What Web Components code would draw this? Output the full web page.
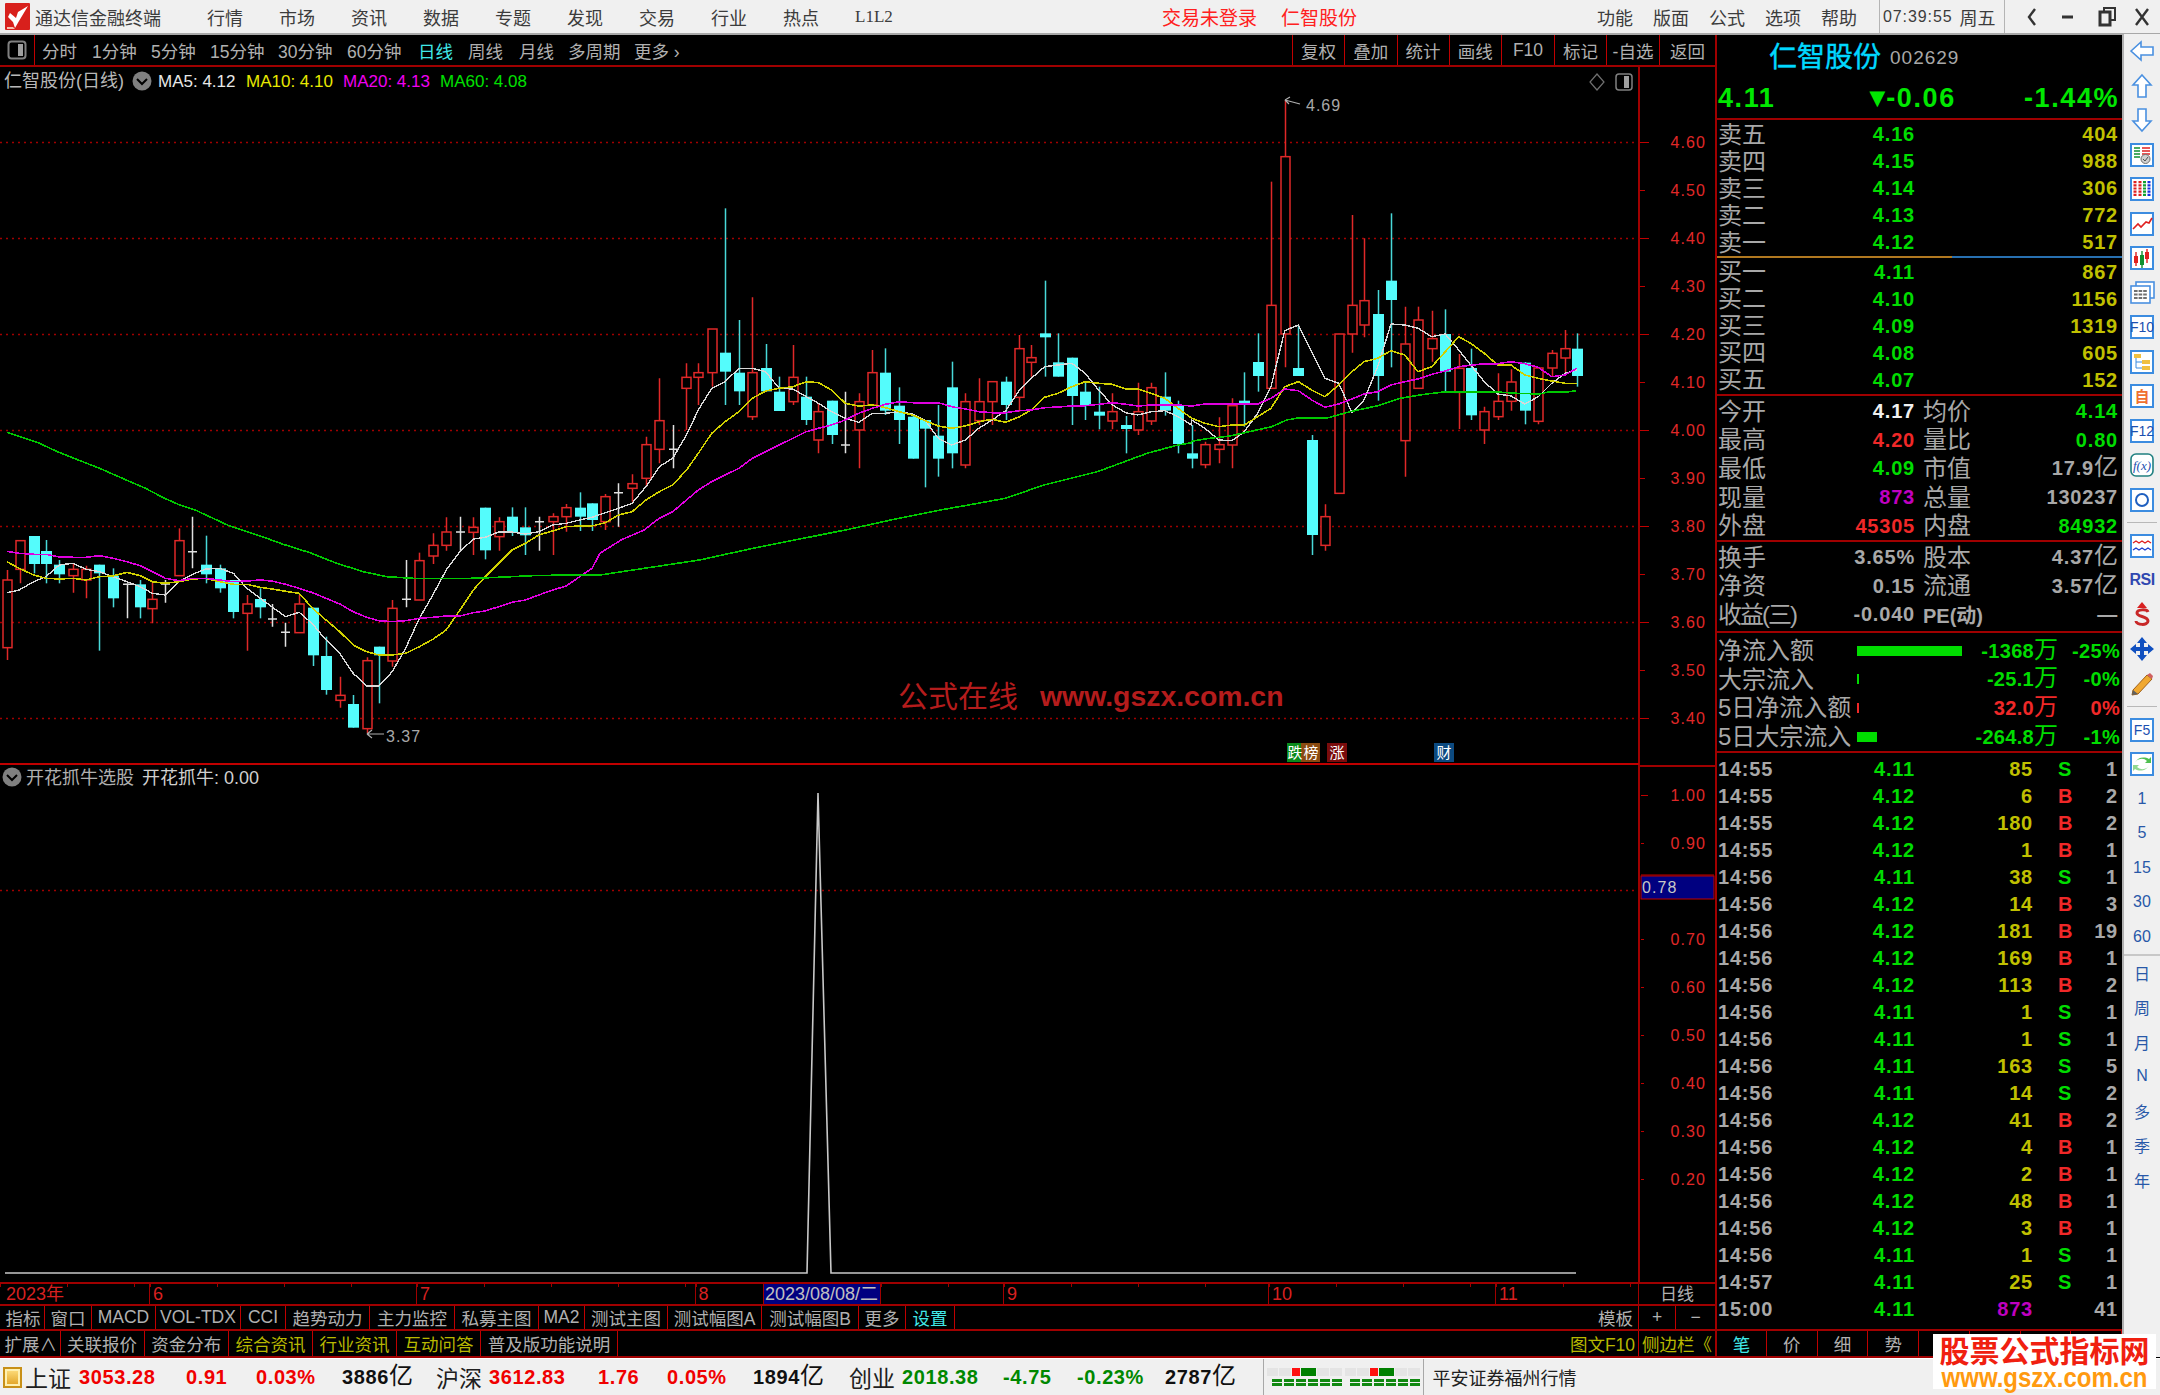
<!DOCTYPE html>
<html lang="zh">
<head>
<meta charset="utf-8">
<title>通达信金融终端</title>
<style>
  html, body { margin: 0; background: #000; }
  body { width: 2160px; height: 1395px; overflow: hidden; }
</style>
</head>
<body>
<tdx-app></tdx-app>
<script>
const FONT = '"Liberation Sans","Noto Sans CJK SC",sans-serif';
const RED = '#a00000';

class TdxCell extends HTMLElement {
    constructor() {
        super();
        this.attachShadow({ mode: 'open' });
        this.shadowRoot.innerHTML = `<style>
            :host{
                display:flex; align-items:center; justify-content:center;
                box-sizing:border-box; flex:0 0 var(--w, auto); height:100%;
                border-right:1px solid #c00000; white-space:nowrap;
                font:17.5px ${FONT}; color:#b0b0b0;
            }
            :host([tone="y"]){ color:#b8b800; }
            :host([tone="c"]){ color:#40e8e8; }
            :host([plain]){ border-right:0; }
        </style><slot></slot>`;
    }
}
globalThis.customElements.define('tdx-cell', TdxCell);

const cells = (list, attrs = '') => list.map(([t, w, tone]) =>
    `<tdx-cell style="--w:${w}px" ${tone ? `tone="${tone}"` : ''} ${attrs}>${t}</tdx-cell>`).join('');

class TdxTitlebar extends HTMLElement {
    constructor() {
        super();
        this.attachShadow({ mode: 'open' });
    }
    connectedCallback() {
        const menu = ['行情', '市场', '资讯', '数据', '专题', '发现', '交易', '行业', '热点'];
        this.shadowRoot.innerHTML = `<style>
            :host{
                display:grid; grid-template-columns:207px 955px 435px 282px 125px 156px;
                align-items:center; box-sizing:border-box; height:35px;
                background:#f0f0f0; border-bottom:2px solid #a8a8a8;
                font:18px ${FONT}; color:#3c3c3c;
            }
            .brand{ display:flex; align-items:center; gap:5px; padding-left:5px; white-space:nowrap; }
            .menu{ display:flex; gap:36px; white-space:nowrap; }
            .menu .l{ font:17px "Liberation Serif",serif; align-self:center; }
            .login{ color:#ff2020; font-size:19px; display:flex; gap:24px; white-space:nowrap; }
            .help{ display:flex; gap:20px; }
            .clock,.win{ display:flex; align-items:center; height:33px; border-left:1px solid #b4b4b4; box-sizing:border-box; }
            .clock{ padding-left:3px; gap:7px; font-size:18px; white-space:nowrap; }
            .clock b{ font:16px "Liberation Sans"; letter-spacing:.9px; }
            .win svg{ display:block; }
        </style>
        <div class="brand">
            <svg width="25" height="27" viewBox="0 0 25 27">
                <rect width="25" height="27" rx="1" fill="#d8201c"/>
                <path d="M3 14 L8 19 L10 25 L14 18 L23 3 L13 9 L11 15 L5 10 Z" fill="#fff"/>
                <path d="M2 24 L8 24 L10 26 L2 26 Z" fill="#f8c0b0"/>
            </svg>
            <span>通达信金融终端</span>
        </div>
        <div class="menu">${menu.map(m => `<span>${m}</span>`).join('')}<span class="l">L1L2</span></div>
        <div class="login"><span>交易未登录</span><span>仁智股份</span></div>
        <div class="help"><span>功能</span><span>版面</span><span>公式</span><span>选项</span><span>帮助</span></div>
        <div class="clock"><b>07:39:55</b><span>周五</span></div>
        <div class="win">
            <svg width="155" height="33" viewBox="0 0 155 33" fill="none" stroke="#333" stroke-width="2.4">
                <path d="M30 9 L24 17 L30 25"/>
                <path d="M57 17 H68" stroke-width="3"/>
                <rect x="95" y="12" width="10" height="13" stroke-width="3"/>
                <path d="M99 11 V8 H110 V20 H106" stroke-width="2"/>
                <path d="M131 9 L143 25 M143 9 L131 25"/>
            </svg>
        </div>`;
    }
}
globalThis.customElements.define('tdx-titlebar', TdxTitlebar);

class TdxToolbar extends HTMLElement {
    constructor() {
        super();
        this.attachShadow({ mode: 'open' });
    }
    connectedCallback() {
        const left = [['分时', 50], ['1分钟', 59], ['5分钟', 59], ['15分钟', 68], ['30分钟', 69], ['60分钟', 71],
            ['日线', 50, 'c'], ['周线', 51], ['月线', 49], ['多周期', 66], ['更多 ›', 56]];
        const right = [['复权', 52], ['叠加', 52.5], ['统计', 52], ['画线', 52.5], ['F10', 53], ['标记', 52], ['-自选', 53], ['返回', 55]];
        this.shadowRoot.innerHTML = `<style>
            :host{ display:flex; box-sizing:border-box; height:32px; border-bottom:2px solid ${RED}; background:#000; }
            .box{ flex:0 0 42px; box-sizing:border-box; }
            .box div{ width:35px; height:100%; box-sizing:border-box; border-right:1px solid #c00000; display:flex; align-items:center; justify-content:center; }
            .items{ display:flex; height:100%; }
            .items tdx-cell{ justify-content:flex-start; }
            .fill{ flex:1; }
            .right{ display:flex; height:100%; border-left:1px solid #c00000; }
            .right tdx-cell:last-child{ border-right:0; }
        </style>
        <div class="box"><div>
            <svg width="20" height="20" viewBox="0 0 20 20"><rect x="1.5" y="1.5" width="17" height="17" rx="3" fill="none" stroke="#808080" stroke-width="2"/><rect x="11" y="4" width="5" height="12" fill="#a0a0a0"/></svg>
        </div></div>
        <div class="items">${cells(left, 'plain')}</div>
        <div class="fill"></div>
        <div class="right">${cells(right)}</div>`;
    }
}
globalThis.customElements.define('tdx-toolbar', TdxToolbar);

// 取自截图的K线,坐标系:[放大图x, 上影, 实体上, 实体下, 下影, 类型]
const K8 = [[18,510,540,743,780,'r'],[53,420,422,508,550,'r'],[88,408,408,492,520,'c'],[120,420,453,492,550,'c'],[155,480,494,523,550,'c'],
[190,490,508,527,578,'r'],[225,497,508,540,595,'r'],[260,494,494,520,752,'c'],[295,505,527,595,622,'c'],[332,550,553,553,655,'w'],
[366,540,553,622,655,'c'],[398,545,598,626,670,'r'],[432,540,552,552,608,'w'],[468,385,422,527,527,'r'],[503,350,455,455,505,'w'],
[538,407,494,523,550,'c'],[574,494,505,565,578,'c'],[610,540,540,636,655,'c'],[645,585,612,640,752,'r'],[680,565,597,622,655,'c'],
[710,612,657,657,680,'w'],[746,668,697,697,740,'w'],[782,585,612,698,698,'r'],[817,623,623,766,798,'c'],[852,710,768,870,884,'c'],
[888,830,886,901,923,'r'],[923,885,912,983,983,'c'],[958,772,782,986,1000,'r'],[990,740,740,766,910,'c'],[1025,600,625,783,800,'r'],
[1060,480,598,598,622,'w'],[1096,458,482,600,600,'r'],[1131,400,436,468,492,'r'],[1166,352,396,436,452,'r'],[1202,350,396,396,452,'w'],
[1237,352,382,397,465,'r'],[1268,323,323,451,478,'c'],[1303,352,365,410,452,'r'],[1338,322,350,396,408,'c'],[1373,322,382,406,465,'c'],
[1408,350,365,365,452,'w'],[1444,340,350,365,465,'r'],[1480,312,323,350,395,'r'],[1515,277,323,350,393,'c'],[1547,310,310,360,393,'c']];
const K9 = [[14,912,920,995,1020,'r'],[48,880,908,908,1010,'w'],[84,853,881,895,935,'r'],[120,740,764,865,890,'r'],[155,565,692,778,820,'r'],
[190,705,778,778,835,'w'],[226,520,562,595,720,'r'],[257,520,548,562,645,'r'],[292,417,417,548,590,'r'],[327,55,488,545,645,'c'],
[363,390,548,604,645,'c'],[398,322,548,680,690,'r'],[433,462,534,604,604,'c'],[468,560,605,663,663,'c'],[504,465,562,635,645,'r'],
[539,560,620,690,705,'c'],[571,640,665,750,790,'r'],[605,632,632,735,762,'c'],[641,605,765,765,790,'w'],[676,610,635,720,835,'r'],
[712,480,548,645,645,'r'],[746,475,548,662,675,'c'],[782,592,647,690,762,'c'],[817,675,680,806,806,'c'],[849,690,690,716,892,'c'],
[884,645,737,806,860,'c'],[919,515,592,790,835,'c'],[955,610,635,825,835,'r'],[990,565,635,692,705,'r'],[1025,575,575,635,705,'r'],
[1060,560,575,645,690,'c'],[1096,435,476,622,665,'r'],[1127,465,503,517,560,'r'],[1162,272,430,442,560,'c'],[1197,430,517,560,560,'c'],
[1233,503,503,618,705,'c'],[1268,575,605,647,690,'c'],[1303,590,665,677,718,'c'],[1339,610,665,693,718,'r'],[1374,678,705,717,790,'c'],
[1405,578,665,720,735,'r'],[1440,578,593,693,705,'r'],[1476,547,620,662,677,'c'],[1511,632,645,762,790,'c'],[1546,705,790,806,835,'c']];
const K7 = [[75,1085,1094,1154,1165,'r'],[116,1012,1094,1108,1150,'r'],[156,955,977,1095,1165,'r'],[193,877,962,972,1040,'c'],[233,760,846,888,935,'c'],
[273,305,676,925,925,'r'],[314,60,230,762,862,'r'],[355,735,864,888,888,'c'],[395,1065,1080,1365,1425,'c'],[435,1273,1310,1396,1412,'r'],
[476,762,762,1240,1240,'r'],[516,405,676,762,818,'r'],[552,475,662,735,772,'r'],[593,630,702,888,962,'c'],[633,400,602,660,862,'c'],
[674,680,792,1082,1190,'r'],[714,680,720,925,925,'r'],[755,692,776,806,845,'r'],[796,688,762,875,935,'c'],[836,822,865,937,1047,'r'],
[872,806,864,1006,1020,'c'],[913,980,995,1050,1092,'r'],[953,880,964,1010,1020,'r'],[993,868,906,964,992,'r'],[1034,846,848,992,1033,'c'],
[1075,862,864,1024,1033,'r'],[1115,810,820,864,890,'r'],[1155,750,806,834,880,'r'],[1191,760,806,888,920,'c']];

const X8 = x => x * 600 / 1568, Y8 = y => 400 + y / 3;
const X9 = x => 600 + x * 600 / 1568, Y9 = y => 190 + y / 3;
const X7 = x => 1180 + x / 3, Y7 = y => 80 + y / 3;

const MA = {
    white: ['#d8d8d8', 1.4,
        [18,578,50,570,88,545,120,530,155,495,190,490,225,508,260,515,295,530,332,545,366,560,398,580,432,585,468,545,503,523,538,507,574,505,610,520,645,565,680,595,710,620,746,650,782,637,817,672,852,720,888,760,923,820,958,858,990,858,1025,815,1060,745,1096,655,1131,585,1166,510,1202,455,1237,417,1268,412,1303,396,1338,396,1373,402,1408,395,1444,375,1480,370,1515,360,1547,352],
        [14,968,48,955,84,940,120,890,155,830,190,805,226,735,257,660,292,595,327,575,363,535,398,535,433,545,468,595,504,597,539,620,571,640,605,665,641,685,676,697,712,670,746,670,782,665,817,672,849,690,884,745,919,765,955,750,990,715,1025,690,1060,662,1096,600,1127,565,1162,530,1197,525,1233,520,1268,550,1303,600,1339,645,1374,668,1405,675,1440,665,1476,662,1511,680,1546,705],
        [35,1020,75,1045,116,1080,156,1082,193,1055,233,1000,273,920,314,752,355,735,395,815,435,895,476,910,516,998,552,960,593,860,633,732,674,735,714,745,755,770,796,762,836,810,872,855,913,905,953,942,993,948,1034,972,1075,950,1115,910,1155,880,1191,870]],
    yellow: ['#d0d000', 1.6,
        [18,485,50,505,88,525,120,535,155,537,190,535,225,540,260,530,295,528,332,517,366,527,398,545,432,550,468,545,503,537,538,535,574,545,610,553,645,553,680,562,710,567,746,574,782,580,817,625,852,660,888,695,923,735,958,755,990,765,1025,765,1060,760,1096,740,1131,718,1166,690,1202,630,1237,570,1268,530,1303,490,1338,450,1373,430,1408,405,1444,393,1480,380,1515,378,1547,378],
        [14,998,48,975,84,965,120,930,155,905,190,885,226,840,257,790,292,730,327,695,363,665,398,625,433,603,468,595,504,590,539,575,571,578,605,600,641,640,676,648,712,645,746,653,782,665,817,675,849,692,884,708,919,715,955,708,990,695,1025,688,1060,697,1096,680,1127,660,1162,622,1197,610,1233,590,1268,575,1303,580,1339,583,1374,597,1405,597,1440,610,1476,625,1511,655,1546,685],
        [35,1015,75,1030,116,1040,156,1035,193,1035,233,1010,273,985,314,920,355,905,395,930,435,950,476,915,516,875,552,845,593,835,633,812,674,825,714,875,755,860,796,815,836,770,872,790,913,820,953,855,993,855,1034,885,1075,895,1115,903,1155,910,1191,910]],
    magenta: ['#e000e0', 1.6,
        [18,454,50,460,88,463,120,463,155,471,190,472,225,472,260,467,295,475,332,485,366,497,398,515,432,535,468,542,503,535,538,535,574,540,610,545,645,543,680,540,710,543,746,553,782,565,817,578,852,595,888,612,923,635,958,652,990,662,1025,665,1060,662,1096,655,1131,652,1166,648,1202,648,1237,638,1268,633,1303,620,1338,607,1373,600,1408,585,1444,570,1480,558,1515,530,1547,505],
        [0,1090,55,1050,115,1020,155,985,190,965,226,930,257,900,292,875,327,855,363,835,398,805,433,785,468,765,504,745,539,725,571,715,605,705,641,690,676,670,712,655,746,643,782,635,817,638,849,638,884,638,919,650,955,657,990,665,1025,668,1060,668,1096,662,1127,660,1162,653,1197,651,1233,648,1268,647,1303,643,1339,638,1374,643,1405,648,1440,645,1476,645,1511,645,1546,648],
        [35,978,75,972,116,972,156,972,193,972,233,972,273,955,314,927,355,932,395,960,435,982,476,972,516,957,552,942,593,935,633,915,674,905,714,897,755,883,796,873,836,860,872,856,913,851,953,851,993,845,1034,851,1075,862,1115,890,1155,885,1191,865]],
    green: ['#00c800', 1.6,
        [18,97,100,128,150,155,200,178,260,205,320,235,380,265,430,295,470,315,510,330,600,378,680,408,740,433,810,458,880,490,950,515,1010,530,1080,535,1200,536,1280,533,1390,527,1480,525,1568,525],
        [260,1110,400,1075,650,1018,760,990,880,962,1060,925,1160,885,1300,845,1430,790,1510,765,1546,758],
        [35,1084,80,1076,150,1068,230,1050,275,1040,320,1020,360,1013,445,1013,510,995,590,978,660,955,740,942,800,935,940,935,1010,940,1080,942,1100,937,1170,935,1188,932]]
};

class TdxChart extends HTMLElement {
    constructor() {
        super();
        this.attachShadow({ mode: 'open' });
    }
    candle([zx, wt, bt, bb, wb, type], fx, fy) {
        const x = Math.round(fx(zx)) + .5, a = fy(wt), b = fy(bt), c = fy(bb), d = fy(wb);
        if (type === 'w') {
            return `<path d="M${x} ${a}V${d}M${x - 4.5} ${b}H${x + 4.5}" stroke="#e0e0e0" stroke-width="1.5" fill="none"/>`;
        }
        if (type === 'c') {
            return `<path d="M${x} ${a}V${d}" stroke="#48d8d8" stroke-width="1.5"/><rect x="${x - 5.5}" y="${b}" width="11" height="${Math.max(c - b, 2)}" fill="#54fcfc"/>`;
        }
        return `<path d="M${x} ${a}V${b}M${x} ${c}V${d}" stroke="#e02828" stroke-width="1.5"/><rect x="${x - 4.5}" y="${b}" width="9" height="${c - b}" fill="#000" stroke="#e02828" stroke-width="1.5"/>`;
    }
    maLine([color, width, a, b, c]) {
        const pts = [];
        const push = (arr, fx, fy) => { for (let i = 0; i < arr.length; i += 2) pts.push(`${fx(arr[i]).toFixed(1)},${fy(arr[i + 1]).toFixed(1)}`); };
        push(a, X8, Y8); push(b, X9, Y9); push(c, X7, Y7);
        return `<polyline points="${pts.join(' ')}" fill="none" stroke="${color}" stroke-width="${width}" stroke-linejoin="round" shape-rendering="crispEdges"/>`;
    }
    render() {
        const py = p => 142 + (4.6 - p) * 480;
        const vy = v => 795 + (1 - v) * 480;
        let grid = '', labels = '';
        for (let i = 0; i <= 12; i++) {
            const p = 4.6 - i * .1, y = Math.round(py(p));
            if (i % 2 === 0) grid += `<path d="M0 ${y + .5}H1638" class="dot"/>`;
            grid += `<path d="M1640 ${y + .5}H${i % 2 ? 1645 : 1649}" class="tick"/>`;
            labels += `<text x="1706" y="${y + 6}" class="ax" text-anchor="end">${p.toFixed(2)}</text>`;
        }
        for (const v of [1, .9, .7, .6, .5, .4, .3, .2]) {
            const y = Math.round(vy(v));
            grid += `<path d="M1641 ${y + .5}H${v === 1 ? 1648 : 1644}" class="tick"/>`;
            labels += `<text x="1706" y="${y + 6}" class="ax" text-anchor="end">${v.toFixed(2)}</text>`;
        }
        const candles = K8.map(k => this.candle(k, X8, Y8)).join('') +
            K9.map(k => this.candle(k, X9, Y9)).join('') +
            K7.map(k => this.candle(k, X7, Y7)).join('');
        const lines = Object.values(MA).map(m => this.maLine(m)).join('');
        this.shadowRoot.innerHTML = `<style>
            :host{ display:block; height:1215px; background:#000; overflow:hidden; }
            svg{ display:block; font-family:${FONT}; }
            .dot{ stroke:#a00000; stroke-width:1.5; stroke-dasharray:2 4; fill:none; }
            .tick{ stroke:#c00000; stroke-width:1; fill:none; }
            .ax{ fill:#e02828; font-size:16px; letter-spacing:1.1px; }
            .t{ font-size:17px; }
            .c{ font-size:18px; }
            .hi{ fill:#a8a8a8; font-size:16px; letter-spacing:1px; }
            .bd{ fill:#fff; font-size:15px; text-anchor:middle; }
        </style>
        <svg width="1715" height="1215" viewBox="0 67 1715 1215">
            ${grid}
            ${candles}
            ${lines}
            ${labels}
            <path d="M1639 67V1282" stroke="${RED}" stroke-width="2"/>
            <path d="M0 764H1639" stroke="#c00000" stroke-width="2"/>
            <path d="M1639 766H1715" stroke="${RED}" stroke-width="2"/>
            <path d="M1285 100L1300 104M1285 100L1290 97M1285 100L1289 104" stroke="#b0b0b0" fill="none" stroke-width="1.2"/>
            <text x="1306" y="111" class="hi">4.69</text>
            <path d="M367 734H384M367 734L372 730M367 734L372 738" stroke="#b0b0b0" fill="none" stroke-width="1.2"/>
            <text x="386" y="742" class="hi">3.37</text>
            <text x="4" y="87" class="c" fill="#b8b8b8">仁智股份(日线)</text>
            <circle cx="142" cy="81" r="9.5" fill="#808080"/><path d="M137 79L142 84L147 79" stroke="#000" stroke-width="2" fill="none"/>
            <text x="158" y="87" class="t" fill="#e8e8e8">MA5: 4.12</text>
            <text x="246" y="87" class="t" fill="#e8e800">MA10: 4.10</text>
            <text x="343" y="87" class="t" fill="#f000f0">MA20: 4.13</text>
            <text x="440" y="87" class="t" fill="#00e000">MA60: 4.08</text>
            <path d="M1597 74L1604 82L1597 90L1590 82Z" fill="none" stroke="#707070" stroke-width="1.2"/>
            <rect x="1616" y="74" width="16" height="16" rx="3" fill="none" stroke="#808080" stroke-width="1.5"/><rect x="1624" y="76" width="5" height="12" fill="#a0a0a0"/>
            <text x="898" y="707" font-size="30" fill="#b41c1c">公式在线</text>
            <text x="1040" y="706" font-size="28.4" font-weight="700" fill="#b41c1c">www.gszx.com.cn</text>
            <rect x="1287" y="743" width="14" height="19" fill="#0a8a1c"/><rect x="1301" y="743" width="19" height="19" fill="#8a4a10"/>
            <text x="1295" y="758" class="bd">跌</text><text x="1311" y="758" class="bd">榜</text>
            <rect x="1327" y="743" width="20" height="19" fill="#7a0c0c"/><text x="1337" y="758" class="bd">涨</text>
            <rect x="1434" y="743" width="20" height="19" fill="#0c4a80"/><text x="1444" y="758" class="bd">财</text>
            <path d="M1641 875H1714" stroke="#c00000"/><rect x="1641" y="876" width="73" height="23" fill="#000080" stroke="#c00000"/>
            <text x="1642" y="893" font-size="16" letter-spacing="1.1" fill="#c8c8c8">0.78</text>
            <path d="M0 890.5H1638" class="dot"/>
            <text x="26" y="784" class="c" fill="#b0b0b0">开花抓牛选股</text>
            <text x="142" y="784" class="c" fill="#d0d0d0">开花抓牛: 0.00</text>
            <circle cx="12" cy="777" r="9.5" fill="#808080"/><path d="M7 775L12 780L17 775" stroke="#000" stroke-width="2" fill="none"/>
            <polyline points="5,1273 807,1273 818,793 831,1273 1576,1273" fill="none" stroke="#c8c8c8" stroke-width="1.6"/>
        </svg>`;
    }
    connectedCallback() {
        this.render();
    }
}
globalThis.customElements.define('tdx-chart', TdxChart);

class TdxTimeaxis extends HTMLElement {
    constructor() {
        super();
        this.attachShadow({ mode: 'open' });
    }
    connectedCallback() {
        const rows = [['2023年', 150], ['6', 267], ['7', 278.6], ['8', 68.4], ['2023/08/08/二', 117], ['', 123], ['9', 265], ['10', 227], ['11', 143]];
        this.shadowRoot.innerHTML = `<style>
            :host{
                display:flex; box-sizing:border-box; height:24px;
                border-top:2px solid ${RED}; border-bottom:2px solid ${RED};
                font:18px ${FONT}; color:#d82020; background:#000;
                white-space:nowrap;
            }
            span{ box-sizing:border-box; padding-left:3px; line-height:21px; border-right:1px solid #a00000; overflow:hidden;
                  background:repeating-linear-gradient(to right,#a00000 0 1px,transparent 1px 67px) 0 0/100% 3px no-repeat; }
            span:nth-of-type(1){ padding-left:6px; }
            .sel{ background:#000080; color:#c0c0c0; padding-left:1px; }
            .end{ flex:1; color:#b0b0b0; text-align:center; padding-left:0; border:0; background:none; font-size:17px; }
        </style>
        ${rows.map(([t, w]) => `<span class="${t.includes('/') ? 'sel' : ''}" style="width:${w}px">${t}</span>`).join('')}
        <span class="end">日线</span>`;
    }
}
globalThis.customElements.define('tdx-timeaxis', TdxTimeaxis);

class TdxBar extends HTMLElement {
    constructor() {
        super();
        this.attachShadow({ mode: 'open' });
        this.shadowRoot.innerHTML = `<style>
            :host{ display:flex; box-sizing:border-box; height:var(--h,25px); padding-left:2px; border-bottom:2px solid ${RED}; background:#000; }
            ::slotted(.fill){ flex:1; }
            ::slotted(tdx-cell:last-child){ border-right:0; }
        </style><slot></slot>`;
    }
}
globalThis.customElements.define('tdx-bar', TdxBar);

class TdxQuote extends HTMLElement {
    constructor() {
        super();
        this.attachShadow({ mode: 'open' });
    }
    connectedCallback() {
        const n = (t, c) => `<span class="n" style="color:${c}">${t}</span>`;
        const G = '#00dc00', Y = '#c0c000', W = '#a8a8a8', R = '#f02828', M = '#c000c0';
        const book = (rows) => rows.map(([l, p, q]) => `<div class="q"><span class="l">${l}</span>${n(p, G)}<span></span>${n(q, Y)}</div>`).join('');
        const stat = (rows) => rows.map(([a, b, bc, c, d, dc]) => `<div class="q s"><span class="l">${a}</span>${n(b, bc)}<span class="l p">${c}</span>${n(d, dc)}</div>`).join('');
        const flow = [['净流入额', 105, G, '-1368万', '-25%', G], ['大宗流入', 2, G, '-25.1万', '-0%', G], ['5日净流入额', 2, R, '32.0万', '0%', R], ['5日大宗流入', 20, G, '-264.8万', '-1%', G]];
        const ticks = [['14:55','4.11','85','S','1'],['14:55','4.12','6','B','2'],['14:55','4.12','180','B','2'],['14:55','4.12','1','B','1'],['14:56','4.11','38','S','1'],['14:56','4.12','14','B','3'],['14:56','4.12','181','B','19'],['14:56','4.12','169','B','1'],['14:56','4.12','113','B','2'],['14:56','4.11','1','S','1'],['14:56','4.11','1','S','1'],['14:56','4.11','163','S','5'],['14:56','4.11','14','S','2'],['14:56','4.12','41','B','2'],['14:56','4.12','4','B','1'],['14:56','4.12','2','B','1'],['14:56','4.12','48','B','1'],['14:56','4.12','3','B','1'],['14:56','4.11','1','S','1'],['14:57','4.11','25','S','1'],['15:00','4.11','873','','41']];
        this.shadowRoot.innerHTML = `<style>
            :host{ display:flex; flex-direction:column; box-sizing:border-box; width:407px; height:1323px; border-left:2px solid ${RED}; background:#000; font-family:${FONT}; color:${W}; }
            section{ padding:0 4px 0 1px; }
            .b{ border-bottom:2px solid ${RED}; }
            .head{ height:85px; box-sizing:border-box; padding:0; }
            .name{ height:40px; padding-left:52px; display:flex; align-items:center; gap:9px; white-space:nowrap; }
            .name b{ font-weight:400; font-size:28px; color:#00d8ff; -webkit-text-stroke:.4px #00d8ff; }
            .name i{ font-style:normal; font-size:19px; letter-spacing:1px; color:#a8a8a8; padding-top:6px; }
            .price{ display:grid; grid-template-columns:146px 160px 95px; font:700 27px "Liberation Sans"; color:#00e800; letter-spacing:1.6px; padding:8px 4px 0 1px; white-space:nowrap; }
            .price u{ text-decoration:none; letter-spacing:-6px; }
            .price span:last-child{ text-align:right; }
            .q{ display:grid; grid-template-columns:80px 117px 68px 135px; grid-template-rows:100%; align-items:center; height:27px; }
            .s{ height:28.6px; }
            .l{ font-size:24px; line-height:27px; white-space:nowrap; color:#a8a8a8; }
            .p{ padding-left:8px; }
            .n{ font:700 20px/22px "Liberation Sans","Noto Sans CJK SC"; letter-spacing:.8px; text-align:right; white-space:nowrap; }
            .n small{ font-weight:400; font-size:24px; line-height:0; color:inherit; letter-spacing:0; }
            .sep{ height:2px; flex:none; background:linear-gradient(to right,#b07820 0 235px,#2870b0 235px); }
            .sell{ height:136px; box-sizing:border-box; padding-top:.5px; }
            .buy{ padding-bottom:1px; }
            .st1{ padding-top:1px; }
            .st2{ padding-top:1px; padding-bottom:2.7px; }
            .fl{ padding-top:3px; padding-bottom:.6px; }
            .f{ display:grid; grid-template-columns:139px 110px 91px 62px; grid-template-rows:100%; align-items:center; height:28.6px; }
            .f .bar{ height:10px; }
            .f .n{ letter-spacing:.3px; }
            .ticks{ flex:1; padding-top:2px; }
            .t{ display:grid; grid-template-columns:60px 137px 118px 55px 30px; align-items:center; height:27px; }
            .t .n:first-child{ text-align:left; }
            .side{ padding-left:25px; }
            .tabs{ display:flex; flex:none; height:27px; box-sizing:border-box; border-bottom:2px solid ${RED}; padding:0; }
        </style>
        <section class="head b">
            <div class="name"><b>仁智股份</b><i>002629</i></div>
            <div class="price"><span>4.11</span><span><u>▼ </u>-0.06</span><span>-1.44%</span></div>
        </section>
        <section class="sell">${book([['卖五','4.16','404'],['卖四','4.15','988'],['卖三','4.14','306'],['卖二','4.13','772'],['卖一','4.12','517']])}</section>
        <div class="sep"></div>
        <section class="buy b">${book([['买一','4.11','867'],['买二','4.10','1156'],['买三','4.09','1319'],['买四','4.08','605'],['买五','4.07','152']])}</section>
        <section class="b st1">${stat([
            ['今开','4.17','#f0f0f0','均价','4.14',G],['最高','4.20',R,'量比','0.80',G],['最低','4.09',G,'市值','17.9<small>亿</small>',W],
            ['现量','873',M,'总量','130237',W],['外盘','45305',R,'内盘','84932',G]])}</section>
        <section class="b st2">${stat([
            ['换手','3.65%',W,'股本','4.37<small>亿</small>',W],['净资','0.15',W,'流通','3.57<small>亿</small>',W],
            ['<span style="letter-spacing:-2px">收益(三)</span>','-0.040',W,'<span style="font:700 20px &quot;Liberation Sans&quot;,&quot;Noto Sans CJK SC&quot;">PE(动)</span>','—',W]])}</section>
        <section class="b fl">${flow.map(([l, w, c, v, p, vc]) => `<div class="f"><span class="l">${l}</span><span><div class="bar" style="width:${w}px;background:${c}"></div></span>${n(v.replace('万', '<small>万</small>'), vc)}${n(p, vc)}</div>`).join('')}</section>
        <section class="ticks b">${ticks.map(([t, p, q, s, c]) => `<div class="t">${n(t, W)}${n(p, G)}${n(q, s ? Y : M)}<span class="n side" style="text-align:left;color:${s === 'S' ? G : R}">${s}</span>${n(c, W)}</div>`).join('')}</section>
        <section class="tabs">${cells([['笔', 49.75, 'c'], ['价', 50.75], ['细', 50.75], ['势', 50.75], ['', 50.75], ['', 50.75], ['', 50.75], ['', 50.75]])}</section>`;
    }
}
globalThis.customElements.define('tdx-quote', TdxQuote);

class TdxSidebar extends HTMLElement {
    constructor() {
        super();
        this.attachShadow({ mode: 'open' });
    }
    connectedCallback() {
        const box = inner => `<svg width="24" height="24" viewBox="0 0 24 24"><rect x="1" y="1" width="22" height="22" fill="#fff" stroke="#3c8ce0" stroke-width="2"/>${inner}</svg>`;
        const free = inner => `<svg width="26" height="26" viewBox="0 0 26 26">${inner}</svg>`;
        const arrow = p => free(`<polygon points="${p}" fill="#fff" stroke="#4a90e0" stroke-width="1.6"/>`);
        const ftxt = t => `<text x="12" y="17" text-anchor="middle" font-size="14" font-family="Liberation Sans" fill="#1c50b0">${t}</text>`;
        const icons = [
            arrow('2,13 12,4 12,9 24,9 24,17 12,17 12,22'),
            arrow('13,2 22,12 17,12 17,24 9,24 9,12 4,12'),
            arrow('13,24 22,14 17,14 17,2 9,2 9,14 4,14'),
            box('<path d="M4 5h6M4 8h6M4 11h6M4 14h6" stroke="#109030" stroke-width="1.6"/><path d="M12 5h8M12 8h8M12 11h8" stroke="#e02020" stroke-width="1.6"/><circle cx="15.5" cy="16" r="4.5" fill="#d0d0d0" stroke="#707070"/><path d="M13 16l2 2 3-4" stroke="#505050" fill="none"/>'),
            box('<path d="M5 4v16" stroke="#e02020" stroke-width="3" stroke-dasharray="2.2 1"/><path d="M10 4v16" stroke="#e02020" stroke-width="3" stroke-dasharray="2.2 1"/><path d="M14.5 4v16" stroke="#10a030" stroke-width="3" stroke-dasharray="2.2 1"/><path d="M19 4v16" stroke="#1830e0" stroke-width="3" stroke-dasharray="2.2 1"/>'),
            box('<polyline points="3,17 8,12 11,15 16,10 19,11 22,6" fill="none" stroke="#e02020" stroke-width="1.6"/>'),
            box('<path d="M6 6v14M17 3v14" stroke="#e02020" stroke-width="1.4"/><rect x="4" y="10" width="4" height="7" fill="#e02020"/><path d="M12 5v17" stroke="#109030" stroke-width="1.4"/><rect x="10" y="9" width="4" height="10" fill="#109030"/><rect x="15" y="6" width="4" height="7" fill="#e02020"/>'),
            free('<rect x="7" y="2" width="18" height="16" fill="#fff" stroke="#4a90e0" stroke-width="1.6"/><rect x="2" y="6" width="19" height="17" fill="#fff" stroke="#4a90e0" stroke-width="1.6"/><path d="M5 11h13M5 14.5h13M5 18h13" stroke="#707070" stroke-width="2" stroke-dasharray="3.6 1"/>'),
            box(ftxt('F10')),
            box('<rect x="4" y="4" width="7" height="4" fill="#f0c040"/><rect x="12" y="10" width="8" height="4" fill="#f0c040"/><rect x="12" y="16" width="8" height="4" fill="#f0c040"/><path d="M6 8v10h6M6 12h6" stroke="#3c8ce0" fill="none"/>'),
            box('<text x="12" y="17.5" text-anchor="middle" font-size="15" font-weight="700" font-family="Noto Sans CJK SC" fill="#f07030">自</text>'),
            box(ftxt('F12')),
            free('<rect x="2" y="2" width="22" height="22" rx="5" fill="#fff" stroke="#208080" stroke-width="1.6"/><text x="13" y="18" text-anchor="middle" font-size="13" font-style="italic" font-family="Liberation Serif" fill="#1c50b0">f(x)</text>'),
            box('<circle cx="12" cy="12" r="6" fill="none" stroke="#2060c0" stroke-width="2"/>'),
            'hr',
            box('<path d="M3 9l3-2 3 2 3-2 3 2 3-2 3 2" fill="none" stroke="#e02020" stroke-width="1.4"/><path d="M3 16l3-2 3 2 3-2 3 2 3-2 3 2" fill="none" stroke="#2040d0" stroke-width="1.4"/>'),
            '<b class="rsi">RSI</b>',
            free('<path d="M13 0l5 6h-10z" fill="#d82020"/><path d="M19 10c-1-3-11-3-11 1s11 3 11 8-12 4-12 0" fill="none" stroke="#c82828" stroke-width="3"/>'),
            free('<path d="M13 1l5 6h-3v4h4V8l6 5-6 5v-3h-4v4h3l-5 6-5-6h3v-4H7v3l-6-5 6-5v3h4V7H8z" fill="#1050c0"/>'),
            free('<path d="M4 19L18 4l5 4L9 23l-6 1z" fill="#f0a830" stroke="#a06018"/><path d="M18 4l5 4 1-3-3-3z" fill="#d06060"/><path d="M3 24l1-5 5 4z" fill="#606060"/>'),
            'hr',
            box(ftxt('F5')),
            box('<path d="M5 11a7 6 0 0 1 12-2l-2 2h6V5l-2 2A9 8 0 0 0 5 11z" fill="#50c050"/><path d="M19 13a7 6 0 0 1-12 2l2-2H3v6l2-2a9 8 0 0 0 14-4z" fill="#90d890"/>'),
            ...['1', '5', '15', '30', '60'],
            'hr2',
            ...['日', '周', '月', 'N', '多', '季', '年']
        ];
        this.shadowRoot.innerHTML = `<style>
            :host{ display:flex; flex-direction:column; align-items:center; box-sizing:border-box; width:38px; height:1323px; margin-top:-1px; background:#f0f0f0; border-left:2px solid #b0b0b0; font:16px ${FONT}; color:#2858a8; }
            .i{ flex:0 0 34.5px; display:flex; align-items:center; justify-content:center; width:100%; }
            .hr{ flex:0 0 11.5px; display:flex; align-items:center; width:100%; }
            .hr::after{ content:""; flex:1; margin:0 3px; height:1px; background:#b8b8b8; }
            .hr2{ flex:0 0 1.5px; width:100%; background:#c8c8c8; }
            .rsi{ font:700 16px "Liberation Sans"; color:#3048b0; letter-spacing:-.5px; }
            svg{ display:block; overflow:visible; }
        </style>
        ${icons.map(c => c === 'hr' ? '<div class="hr"></div>' : c === 'hr2' ? '<div class="hr2"></div>' : `<div class="i">${c}</div>`).join('')}`;
    }
}
globalThis.customElements.define('tdx-sidebar', TdxSidebar);

class TdxStatusbar extends HTMLElement {
    constructor() {
        super();
        this.attachShadow({ mode: 'open' });
    }
    connectedCallback() {
        const R = '#f00000', G = '#008800', K = '#101010';
        const items = [['上证', 54, 'l'], ['3053.28', 107, R], ['0.91', 70, R], ['0.03%', 86, R], ['3886亿', 94, K],
            ['沪深', 53, 'l'], ['3612.83', 109, R], ['1.76', 69, R], ['0.05%', 86, R], ['1894亿', 96, K],
            ['创业', 53, 'l'], ['2018.38', 101, G], ['-4.75', 74, G], ['-0.23%', 88, G], ['2787亿', 97.5, K]];
        const cell = ([t, w, c]) => {
            if (c === 'l') return `<span class="l" style="width:${w}px">${t}</span>`;
            return `<span class="v" style="width:${w}px;color:${c}">${t.replace('亿', '<small>亿</small>')}</span>`;
        };
        const meter = `<div class="m"><div class="top"><i></i><i></i><i class="r"></i><i class="g"></i><i></i><i></i></div><div class="bot">${'<u></u>'.repeat(12)}</div></div>`;
        this.shadowRoot.innerHTML = `<style>
            :host{ display:flex; align-items:center; box-sizing:border-box; height:37px; background:#f0f0f0; border-top:1px solid #fff; padding-left:3px; font-family:${FONT}; white-space:nowrap; }
            .ico{ flex:0 0 19px; height:21px; box-sizing:border-box; margin-right:3px; background:linear-gradient(#ffe080,#e0a020); border:2px solid #c89018; box-shadow:inset 0 0 0 2px #fff0b0; }
            .l{ font-size:23px; color:#202020; flex:none; }
            .v{ font:700 20px/24px "Liberation Sans","Noto Sans CJK SC"; letter-spacing:.6px; flex:none; }
            .v small{ font-size:24px; font-weight:400; line-height:0; letter-spacing:0; }
            .ms{ display:flex; gap:3px; align-items:center; height:100%; border-left:1px solid #a8a8a8; border-right:1px solid #a8a8a8; padding:0 3px 0 3px; margin-right:9px; }
            .m{ width:75px; display:flex; flex-direction:column; gap:3px; }
            .top{ display:flex; gap:1px; height:8px; }
            .top i{ flex:1; background:#e4e4e4; }
            .top .r{ background:#ff1010; flex:.7; } .top .g{ background:#008000; flex:1.3; }
            .bot{ display:grid; grid-template-columns:repeat(6,1fr); gap:1px 2px; padding-left:5px; }
            .bot u{ height:3px; background:#108810; display:block; }
            .txt{ font-size:18px; color:#202020; }
        </style>
        <div class="ico"></div>
        ${items.map(cell).join('')}
        <div class="ms">${meter}${meter}</div>
        <span class="txt">平安证券福州行情</span>`;
    }
}
globalThis.customElements.define('tdx-statusbar', TdxStatusbar);

class TdxLogo extends HTMLElement {
    constructor() {
        super();
        this.attachShadow({ mode: 'open' });
        this.shadowRoot.innerHTML = `<style>
            :host{ position:absolute; left:1933px; top:1334px; width:223px; height:55px; background:#fff; text-align:center; white-space:nowrap; }
            .a{ height:31px; font:700 30px/31px "Noto Sans CJK SC",sans-serif; color:#f02010; }
            .b{ height:24px; font:700 24px/22px "Liberation Sans",sans-serif; color:#ff9a10; transform:scaleY(1.15); transform-origin:50% 0; }
        </style><div class="a">股票公式指标网</div><div class="b">www.gszx.com.cn</div>`;
    }
}
globalThis.customElements.define('tdx-logo', TdxLogo);

class TdxApp extends HTMLElement {
    constructor() {
        super();
        this.attachShadow({ mode: 'open' });
    }
    connectedCallback() {
        const bar1 = [['指标', 43], ['窗口', 47], ['MACD', 64], ['VOL-TDX', 85], ['CCI', 45], ['趋势动力', 84], ['主力监控', 85], ['私募主图', 84], ['MA2', 46], ['测试主图', 83], ['测试幅图A', 94], ['测试幅图B', 97], ['更多', 47], ['设置', 49, 'c']];
        const bar1r = [['模板', 46], ['+', 37], ['−', 39]];
        const bar2 = [['扩展∧', 58.6], ['关联报价', 84], ['资金分布', 84.4], ['综合资讯', 84, 'y'], ['行业资讯', 84, 'y'], ['互动问答', 84, 'y'], ['普及版功能说明', 137]];
        const bar2r = [['图文F10', 72, 'y'], ['侧边栏《', 76, 'y']];
        this.shadowRoot.innerHTML = `<style>
            :host{ display:flex; flex-direction:column; position:relative; width:2160px; height:1395px; background:#000; overflow:hidden; }
            .main{ display:flex; flex:none; height:1323px; }
            .left{ display:flex; flex-direction:column; width:1715px; flex:none; }
        </style>
        <tdx-titlebar></tdx-titlebar>
        <div class="main">
            <div class="left">
                <tdx-toolbar></tdx-toolbar>
                <tdx-chart></tdx-chart>
                <tdx-timeaxis></tdx-timeaxis>
                <tdx-bar>${cells(bar1)}<span class="fill"></span>${cells(bar1r)}</tdx-bar>
                <tdx-bar style="--h:27px">${cells(bar2)}<span class="fill"></span>${cells(bar2r)}</tdx-bar>
            </div>
            <tdx-quote></tdx-quote>
            <tdx-sidebar></tdx-sidebar>
        </div>
        <tdx-statusbar></tdx-statusbar>
        <tdx-logo></tdx-logo>`;
    }
}
globalThis.customElements.define('tdx-app', TdxApp);
</script>
</body>
</html>
